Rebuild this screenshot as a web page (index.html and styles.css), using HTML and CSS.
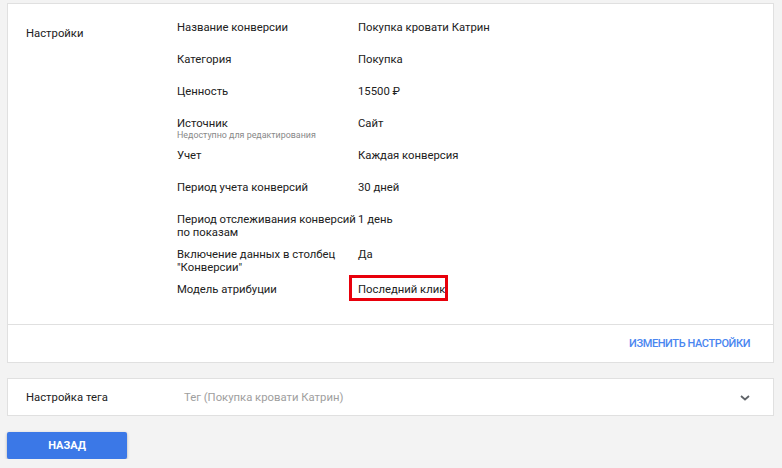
FILE: index.html
```html
<!DOCTYPE html>
<html lang="ru">
  <head>
    <meta charset="UTF-8" />
    <meta name="viewport" content="width=device-width, initial-scale=1.0" />
    <title>Конверсия</title>
    <link rel="stylesheet" href="styles.css">
  </head>
  <body>
    <div class="card">
      <div class="settings">
        <div class="section-title">Настройки</div>
        <div class="rows">
          <div class="row">
            <div class="label">Название конверсии</div>
            <div class="value">Покупка кровати Катрин</div>
          </div>
          <div class="row">
            <div class="label">Категория</div>
            <div class="value">Покупка</div>
          </div>
          <div class="row">
            <div class="label">Ценность</div>
            <div class="value">15500 ₽</div>
          </div>
          <div class="row">
            <div class="label">
              Источник
              <span class="hint">Недоступно для редактирования</span>
            </div>
            <div class="value">Сайт</div>
          </div>
          <div class="row">
            <div class="label">Учет</div>
            <div class="value">Каждая конверсия</div>
          </div>
          <div class="row">
            <div class="label">Период учета конверсий</div>
            <div class="value">30 дней</div>
          </div>
          <div class="row">
            <div class="label">Период отслеживания конверсий по показам</div>
            <div class="value">1 день</div>
          </div>
          <div class="row">
            <div class="label">Включение данных в столбец "Конверсии"</div>
            <div class="value">Да</div>
          </div>
          <div class="row">
            <div class="label">Модель атрибуции</div>
            <div class="value"><span class="marked">Последний клик</span></div>
          </div>
        </div>
      </div>
      <div class="card-footer">
        <a href="#" class="link-btn">Изменить настройки</a>
      </div>
    </div>

    <div class="card tag">
      <div class="section-title">Настройка тега</div>
      <div class="tag-name">Тег (Покупка кровати Катрин)</div>
      <svg class="chevron" width="12" height="8" viewBox="0 0 12 8">
        <path d="M2 2 6 5.5 10 2" fill="none" stroke="#5f6368" stroke-width="1.8" />
      </svg>
    </div>

    <button type="button" class="back">Назад</button>
  </body>
</html>
```

FILE: styles.css
```css
body {
  margin: 0;
  padding: 3px 8px 0 7px;
  background-color: #f3f3f3;
  font-family: Roboto, "Liberation Sans", Arial, sans-serif;
  font-size: 11.3px;
  color: #212121;
}

.card {
  background-color: white;
  border: 1px solid #e0e0e0;
}

.settings {
  display: flex;
  padding: 17px 0 18px 18px;
}
.section-title {
  width: 151px;
  flex-shrink: 0;
  padding-top: 6px;
  line-height: 13px;
}
.rows {
  flex: 1;
}
.row {
  display: flex;
  min-height: 23px;
  padding-bottom: 9px;
  line-height: 13px;
}
.row:last-child {
  padding-bottom: 0;
}
.label {
  width: 181px;
  flex-shrink: 0;
}
.hint {
  display: block;
  font-size: 8.9px;
  line-height: 10px;
  color: #888;
}
.marked {
  position: relative;
}
.marked::after {
  content: "";
  position: absolute;
  left: -9px;
  top: -8px;
  width: 93px;
  height: 20px;
  border: 3px solid #e8000b;
}

.card-footer {
  display: flex;
  justify-content: flex-end;
  align-items: center;
  height: 37px;
  padding-right: 23px;
  border-top: 1px solid #e0e0e0;
}
.link-btn {
  color: #4a86f0;
  text-decoration: none;
  text-transform: uppercase;
  font-size: 11px;
  font-weight: 500;
  letter-spacing: -0.4px;
}

.tag {
  display: flex;
  align-items: center;
  height: 35px;
  margin-top: 15px;
  padding: 1px 22px 0 18px;
}
.tag .section-title {
  width: 158px;
  padding-top: 0;
}
.tag-name {
  flex: 1;
  color: #9e9e9e;
}
.chevron {
  display: block;
}

.back {
  display: block;
  width: 120px;
  height: 27px;
  margin-top: 16px;
  border: none;
  border-radius: 2px;
  background-color: #3b78e7;
  color: white;
  font-family: inherit;
  font-size: 11px;
  font-weight: bold;
  text-transform: uppercase;
  box-shadow: 0 1px 3px rgba(0, 0, 0, 0.3);
}
```
